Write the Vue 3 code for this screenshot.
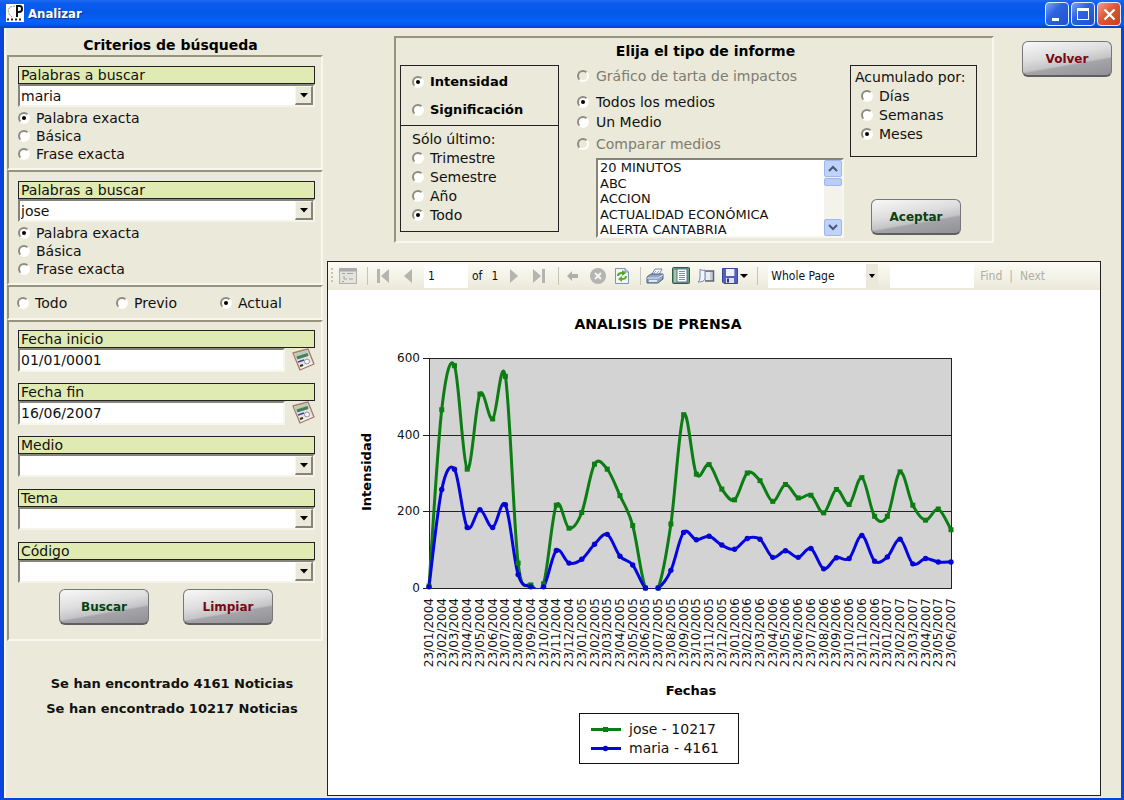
<script setup>
import { ref } from 'vue'

const searches = ref([
  { id: 'p1', word: 'maria', mode: 'Palabra exacta' },
  { id: 'p2', word: 'jose', mode: 'Palabra exacta' }
])
const modes = ['Palabra exacta', 'Básica', 'Frase exacta']
const scopes = ['Todo', 'Previo', 'Actual']
const scope = ref('Actual')
const dates = ref([
  { id: 'inicio', label: 'Fecha inicio', value: '01/01/0001' },
  { id: 'fin', label: 'Fecha fin', value: '16/06/2007' }
])
const filters = ['Medio', 'Tema', 'Código']
const messages = ['Se han encontrado 4161 Noticias', 'Se han encontrado 10217 Noticias']

const measures = ['Intensidad', 'Significación']
const measure = ref('Intensidad')
const periods = ['Trimestre', 'Semestre', 'Año', 'Todo']
const period = ref('Todo')
const steps = ['Días', 'Semanas', 'Meses']
const step = ref('Meses')
const kinds = [
  { name: 'Gráfico de tarta de impactos', disabled: true },
  { name: 'Todos los medios', disabled: false },
  { name: 'Un Medio', disabled: false },
  { name: 'Comparar medios', disabled: true }
]
const kind = ref('Todos los medios')
const media = ['20 MINUTOS', 'ABC', 'ACCION', 'ACTUALIDAD ECONÓMICA', 'ALERTA CANTABRIA']

const jose = [5, 465, 580, 310, 506, 441, 552, 65, 8, 11, 216, 156, 197, 323, 310, 241, 163, 0, 0, 167, 452, 297, 322, 258, 230, 300, 280, 226, 270, 235, 242, 196, 257, 218, 288, 187, 187, 303, 216, 177, 206, 152]
const maria = [3, 257, 310, 158, 204, 158, 217, 35, 3, 3, 98, 65, 75, 114, 140, 83, 60, 0, 0, 46, 145, 126, 135, 112, 101, 129, 127, 80, 97, 80, 103, 50, 79, 77, 137, 70, 81, 127, 63, 77, 68, 68]

const plot = { left: 101, right: 623, top: 68, bottom: 298 }
const xAt = (i) => plot.left + (i * (plot.right - plot.left)) / (jose.length - 1)
const yAt = (v) => plot.bottom - (v * (plot.bottom - plot.top)) / 600
const toPoints = (values) => values.map((v, i) => ({ x: xAt(i), y: yAt(v) }))

// Cardinal spline through every point
function spline(points) {
  let d = `M${points[0].x} ${points[0].y}`
  for (let i = 0; i < points.length - 1; i++) {
    const a = points[Math.max(i - 1, 0)]
    const b = points[i]
    const c = points[i + 1]
    const e = points[Math.min(i + 2, points.length - 1)]
    d += `C${b.x + (c.x - a.x) / 6} ${b.y + (c.y - a.y) / 6} ${c.x - (e.x - b.x) / 6} ${c.y - (e.y - b.y) / 6} ${c.x} ${c.y}`
  }
  return d
}
const josePoints = toPoints(jose)
const mariaPoints = toPoints(maria)
const labels = jose.map((_, i) => `23/${String((i % 12) + 1).padStart(2, '0')}/${2004 + Math.floor(i / 12)}`)
const levels = [600, 400, 200, 0]
</script>

<template>
  <div class="window">
    <header class="titlebar">
      <svg class="app-icon" width="18" height="18" viewBox="0 0 18 18" aria-hidden="true">
        <rect width="18" height="18" fill="#fff" />
        <path d="M9 2L4 3L2 6L3 10L6 13" fill="none" stroke="#8b93a5" stroke-dasharray="2 1" />
        <path d="M11 13V2H14Q16 2 16 5Q16 8 13 8H11" fill="none" stroke="#111" stroke-width="2" />
        <path d="M1 15.5H17" stroke="#222" stroke-width="2" stroke-dasharray="2 2" />
      </svg>
      <h1>Analizar</h1>
      <div class="win-buttons">
        <button type="button" aria-label="Minimizar"><svg width="21" height="21" viewBox="0 0 21 21"><path d="M5 15.5H12" stroke="#fff" stroke-width="3" /></svg></button>
        <button type="button" aria-label="Maximizar"><svg width="21" height="21" viewBox="0 0 21 21"><path d="M4 5.5H16" stroke="#fff" stroke-width="3" /><rect x="4.500" y="4.500" width="11" height="11" fill="none" stroke="#fff" /></svg></button>
        <button type="button" class="close" aria-label="Cerrar"><svg width="21" height="21" viewBox="0 0 21 21"><path d="M5.500 5.500L15.500 15.500M15.500 5.500L5.500 15.500" stroke="#fff" stroke-width="2.300" /></svg></button>
      </div>
    </header>

    <div class="body">
      <aside class="side">
        <h2>Criterios de búsqueda</h2>
        <section v-for="s in searches" :key="s.id" class="group search">
          <label class="caption" :for="s.id">Palabras a buscar</label>
          <div class="combo">
            <select :id="s.id" v-model="s.word"><option>{{ s.word }}</option></select>
            <span class="drop"><svg width="8" height="5" viewBox="0 0 8 5"><path d="M0 0H8L4 4.500Z" /></svg></span>
          </div>
          <div class="stack">
            <label v-for="m in modes" :key="m" class="choice"><input v-model="s.mode" type="radio" :name="s.id + '-modo'" :value="m" />{{ m }}</label>
          </div>
        </section>

        <section class="group scopes">
          <label v-for="s in scopes" :key="s" class="choice"><input v-model="scope" type="radio" name="ambito" :value="s" />{{ s }}</label>
        </section>

        <section class="group filters">
          <div v-for="d in dates" :key="d.id">
            <label class="caption" :for="d.id">{{ d.label }}</label>
            <div class="date-row">
              <input :id="d.id" v-model="d.value" type="text" />
              <button type="button" :aria-label="'Calendario ' + d.label">
                <svg width="24" height="24" viewBox="0 0 24 24">
                  <path d="M2 5L17 1L23 16L9 22Z" fill="#e9e6d8" stroke="#a5786a" stroke-width="1.300" stroke-linejoin="round" />
                  <path d="M3 6L16 2L18 7L5 11Z" fill="#b9cdb9" />
                  <path d="M6 10L17 6.500" stroke="#47805c" stroke-width="3" />
                  <path d="M7 14L13 12" stroke="#36479a" stroke-width="1.500" />
                  <path d="M9 18L12 17" stroke="#333" stroke-width="2" />
                  <circle cx="16" cy="13.500" r="2.500" fill="#f5f4fa" stroke="#8e8fa5" />
                  <path d="M10 20L21 15" stroke="#fff" />
                </svg>
              </button>
            </div>
          </div>
          <div v-for="f in filters" :key="f">
            <label class="caption" :for="'f-' + f">{{ f }}</label>
            <div class="combo">
              <select :id="'f-' + f"><option></option></select>
              <span class="drop"><svg width="8" height="5" viewBox="0 0 8 5"><path d="M0 0H8L4 4.500Z" /></svg></span>
            </div>
          </div>
          <div class="actions">
            <button type="button" class="push go">Buscar</button>
            <button type="button" class="push stop">Limpiar</button>
          </div>
        </section>
        <div class="messages"><p v-for="m in messages" :key="m">{{ m }}</p></div>
      </aside>

      <main class="main">
        <div class="top">
          <section class="group report">
            <h2>Elija el tipo de informe</h2>
            <div class="report-cols">
              <div class="framed measure">
                <div class="strong">
                  <label v-for="m in measures" :key="m" class="choice"><input v-model="measure" type="radio" name="medida" :value="m" />{{ m }}</label>
                </div>
                <div class="periods">
                  <p>Sólo último:</p>
                  <label v-for="p in periods" :key="p" class="choice"><input v-model="period" type="radio" name="periodo" :value="p" />{{ p }}</label>
                </div>
              </div>
              <div class="kinds">
                <label v-for="k in kinds" :key="k.name" class="choice" :class="{ off: k.disabled }"><input v-model="kind" type="radio" name="tipo" :value="k.name" :disabled="k.disabled" />{{ k.name }}</label>
                <div class="listbox">
                  <select size="5" multiple aria-label="Medios"><option v-for="m in media" :key="m">{{ m }}</option></select>
                  <div class="scroll" aria-hidden="true">
                    <span class="arrow"><svg width="10" height="7" viewBox="0 0 10 7"><path d="M1 6L5 2L9 6" /></svg></span>
                    <span class="thumb"></span>
                    <span class="arrow down"><svg width="10" height="7" viewBox="0 0 10 7"><path d="M1 1L5 5L9 1" /></svg></span>
                  </div>
                </div>
              </div>
              <div class="right">
                <div class="framed steps">
                  <p>Acumulado por:</p>
                  <label v-for="s in steps" :key="s" class="choice"><input v-model="step" type="radio" name="acumulado" :value="s" />{{ s }}</label>
                </div>
                <button type="button" class="push go">Aceptar</button>
              </div>
            </div>
          </section>
          <button type="button" class="push stop back">Volver</button>
        </div>

        <section class="viewer">
          <div class="toolbar">
            <span class="grip"></span>
            <button type="button" class="tb w20" aria-label="Document map"><svg width="18" height="18" viewBox="0 0 18 18"><rect x=".5" y="1.500" width="17" height="15" fill="#e4e4df" stroke="#b0b0ab" /><path d="M1 3H17" stroke="#aaa" stroke-width="3" /><path d="M3 6.500H6M8 6.500H14M5 9V12H8M10 12H14M3 14.500H5" stroke="#a5a5a0" fill="none" /></svg></button>
            <i class="sep s1"></i>
            <button type="button" class="tb w24" aria-label="First page"><svg width="12" height="14" viewBox="0 0 12 14"><path d="M0 0H3V14H0ZM12 0V14L4 7Z" fill="#b5b5b0" /></svg></button>
            <button type="button" class="tb w26" aria-label="Previous page"><svg width="8" height="14" viewBox="0 0 8 14"><path d="M8 0V14L0 7Z" fill="#b5b5b0" /></svg></button>
            <input class="page-no" type="text" value="1" aria-label="Page" />
            <span class="pages"><span>of</span><span>1</span></span>
            <button type="button" class="tb w24" aria-label="Next page"><svg width="8" height="14" viewBox="0 0 8 14"><path d="M0 0V14L8 7Z" fill="#b5b5b0" /></svg></button>
            <button type="button" class="tb w26" aria-label="Last page"><svg width="12" height="14" viewBox="0 0 12 14"><path d="M9 0H12V14H9ZM0 0V14L8 7Z" fill="#b5b5b0" /></svg></button>
            <i class="sep s2"></i>
            <button type="button" class="tb w26" aria-label="Back"><svg width="12" height="10" viewBox="0 0 12 10"><path d="M0 5L5 0V3H11V7H5V10Z" fill="#b0b0ab" /></svg></button>
            <button type="button" class="tb w24" aria-label="Stop"><svg width="16" height="16" viewBox="0 0 16 16"><circle cx="8" cy="8" r="8" fill="#b4b4b0" /><path d="M5 5L11 11M11 5L5 11" stroke="#f4f4f0" stroke-width="2" /></svg></button>
            <button type="button" class="tb w24" aria-label="Refresh"><svg width="16" height="18" viewBox="0 0 16 18"><path d="M1.500 1.500H11L14.500 5V16.500H1.500Z" fill="#eff5fb" stroke="#7f94b2" /><path d="M11 1.500V5H14.500" fill="#bccbe0" stroke="#7f94b2" /><path d="M4 9Q4 6 8 6H9" stroke="#53a528" stroke-width="2" fill="none" /><path d="M8 3L12 6L8 9Z" fill="#53a528" /><path d="M12 9Q12 12 8 12H7" stroke="#6aa912" stroke-width="2" fill="none" /><path d="M8 9L4 12L8 15Z" fill="#6aa912" /></svg></button>
            <i class="sep s2"></i>
            <button type="button" class="tb w26" aria-label="Print"><svg width="18" height="17" viewBox="0 0 18 17"><path d="M6 6L9 1H16L13 7Z" fill="#f4f8fd" stroke="#7588aa" /><path d="M1 9L5 6H17V11L12 15H1Z" fill="#8fa5c4" stroke="#4b5f82" /><path d="M1 10H12L17 7" stroke="#dfe9f5" fill="none" /><path d="M3 13H11" stroke="#fff" stroke-width="1.500" /><path d="M8 5L10 3M11 5L13 3" stroke="#9aabc5" /></svg></button>
            <button type="button" class="tb w26" aria-label="Print layout"><svg width="18" height="18" viewBox="0 0 18 18"><rect x=".5" y=".5" width="17" height="16" rx="1" fill="#6c9b80" stroke="#35574f" /><path d="M2 3H5V15H2Z" fill="#a0c8a2" /><rect x="5" y="2" width="10" height="13" fill="#fff" stroke="#597594" /><path d="M7 4.500H13M7 6.500H13M7 8.500H13M7 10.500H13M7 12.500H13" stroke="#7e91a3" /></svg></button>
            <button type="button" class="tb w24" aria-label="Page setup"><svg width="18" height="16" viewBox="0 0 18 16"><path d="M8 3H16.500V13H8" fill="#c6cdd5" stroke="#5a6675" stroke-width="1.500" /><path d="M1 14Q3 13 3 9V1.500Q6 3 8 2V11Q7 14 1 14Z" fill="#eef5fc" stroke="#7588a0" /><path d="M9 4H13V12H9Z" fill="#e9edf1" /></svg></button>
            <button type="button" class="tb w34" aria-label="Export"><svg width="26" height="16" viewBox="0 0 26 16"><path d="M.5.5H15.500V15.500H2L.5 14Z" fill="#5460bd" stroke="#3b459b" /><rect x="4" y="1" width="8" height="7" fill="#f0f2fb" /><path d="M12.500 1V8" stroke="#8d96dc" /><rect x="4" y="10" width="8" height="5" fill="#dde1ee" /><path d="M6 10.500V14.500" stroke="#2e3478" stroke-width="2" /><path d="M18 6H26L22 10Z" fill="#000" /></svg></button>
            <i class="sep s3"></i>
            <span class="zoom"><select aria-label="Zoom"><option>Whole Page</option></select><span><svg width="6" height="4" viewBox="0 0 6 4"><path d="M0 0H6L3 4Z" /></svg></span></span>
            <input class="find" type="text" aria-label="Find text" />
            <button type="button" class="word">Find</button><span class="bar">|</span><button type="button" class="word">Next</button>
          </div>

          <svg class="chart" viewBox="0 0 772 500" role="img" aria-label="Analisis de prensa">
            <defs><clipPath id="plot-area"><rect :x="plot.left - 2" :y="plot.top" :width="plot.right - plot.left + 4" :height="plot.bottom - plot.top + 1" /></clipPath></defs>
            <text class="b t14" x="330" y="39" text-anchor="middle">ANALISIS DE PRENSA</text>
            <rect :x="plot.left" :y="plot.top" :width="plot.right - plot.left" :height="plot.bottom - plot.top" fill="#d3d3d3" />
            <g v-for="l in levels" :key="l">
              <rect class="ink" :x="plot.left - 6" :y="Math.round(yAt(l))" :width="plot.right - plot.left + 6" height="1" />
              <text class="t12" :x="plot.left - 9" :y="Math.round(yAt(l)) + 4" text-anchor="end">{{ l }}</text>
            </g>
            <rect class="ink" :x="plot.left" :y="plot.top" width="1" :height="plot.bottom - plot.top + 1" />
            <rect class="ink" :x="plot.right" :y="plot.top" width="1" :height="plot.bottom - plot.top + 1" />
            <g clip-path="url(#plot-area)" fill="none" stroke-width="3">
              <path :d="spline(josePoints)" stroke="#0c7d13" />
              <path :d="spline(mariaPoints)" stroke="#0505e0" />
            </g>
            <rect v-for="(p, i) in josePoints" :key="'j' + i" :x="p.x - 2.5" :y="p.y - 2.5" width="5" height="5" fill="#0c7d13" />
            <circle v-for="(p, i) in mariaPoints" :key="'m' + i" :cx="p.x" :cy="p.y" r="2.700" fill="#0505d0" />
            <text v-for="(d, i) in labels" :key="d" class="t12" text-anchor="end" :transform="`translate(${Math.round(xAt(i)) + 4} 308) rotate(-90)`">{{ d }}</text>
            <text class="b t13" text-anchor="middle" transform="translate(43 182) rotate(-90)">Intensidad</text>
            <text class="b t13" x="363" y="405" text-anchor="middle">Fechas</text>
            <rect x="251.500" y="423.500" width="159" height="50" fill="#fff" stroke="#111" />
            <path d="M263 439.500H293" stroke="#0c7d13" stroke-width="3" /><rect x="275" y="437" width="5" height="5" fill="#0c7d13" />
            <path d="M263 458.500H293" stroke="#0505e0" stroke-width="3" /><circle cx="277.500" cy="458.500" r="2.700" fill="#0505d0" />
            <text class="t14" x="301" y="444">jose - 10217</text>
            <text class="t14" x="301" y="463">maria - 4161</text>
          </svg>
        </section>
      </main>
    </div>
  </div>
</template>

<style>
body { background: #ebe9d9; }
</style>

<style scoped>
* { box-sizing: border-box; margin: 0; }
.window { min-height: 100vh; display: flex; flex-direction: column; background: #ebe9d9; font: 14px/18px "DejaVu Sans", Verdana, sans-serif; color: #111; border: solid #0845d8; border-width: 0 3px 2px 4px; }
button, input, select { font: inherit; color: inherit; }
button { padding: 0; border: 0; background: none; }

.titlebar { height: 28px; margin: 0 -3px 0 -4px; padding: 0 3px 0 6px; display: flex; align-items: center; gap: 4px; background: linear-gradient(#1f6af0 0, #0a5cf0 12%, #0557e8 45%, #0462f8 75%, #0359ee 88%, #0540c0); color: #fff; }
.app-icon { margin-bottom: 2px; }
.titlebar h1 { flex: 1; font: bold 13px/18px "DejaVu Sans Condensed", "DejaVu Sans", sans-serif; text-shadow: 1px 1px #0a3596; }
.win-buttons { display: flex; gap: 2px; }
.win-buttons button { width: 24px; height: 24px; border: 1px solid #e5eefc; border-radius: 4px; background: linear-gradient(135deg, #7da4f3, #2e63e0 40%, #1b50cf); display: grid; place-items: center; }
.win-buttons .close { background: linear-gradient(135deg, #efa088, #dc5935 45%, #c5401d); }

.body { flex: 1; display: grid; grid-template-columns: 321px minmax(0, 1fr); border-left: 2px solid #f7f7ef; }
.side { padding: 0 4px 0 1px; }
h2 { font-size: 14px; line-height: 18px; text-align: center; color: #000; }
.side h2 { padding: 8px 0 1px 11px; }
.group { border: 2px solid; border-color: #96937f #f8f7ee #f8f7ee #96937f; }
.side .group { padding: 9px 6px 5px 9px; }
.caption { display: block; height: 18px; border: 1px solid #222; background: #dfebb3; padding-left: 2px; line-height: 17px; }
.combo { height: 23px; display: flex; background: #fff; border: 2px solid; border-color: #85837a #f5f4ea #f5f4ea #85837a; position: relative; }
.combo select { flex: 1; width: 100%; appearance: none; border: 0; background: none; padding: 0 22px 0 1px; line-height: 18px; outline: 0; }
.drop { position: absolute; top: 0; right: 0; width: 18px; height: 19px; background: #ebe9d9; border: solid; border-width: 1px 2px 2px 1px; border-color: #f8f7ee #85837a #85837a #f8f7ee; display: grid; place-items: center; pointer-events: none; }
.stack { margin-top: 2px; display: grid; }
.choice { display: flex; align-items: center; gap: 6px; white-space: nowrap; }
.choice input { appearance: none; flex: none; width: 12px; height: 12px; margin: 0; border: 2px solid; border-color: #8e8c80 #fffef8 #fffef8 #8e8c80; border-radius: 50%; background: #fff; display: grid; place-items: center; }
.choice input:checked::after { content: ""; width: 4px; height: 4px; border-radius: 50%; background: #000; }
.choice input:disabled { background: #ebe9d9; }
.off { color: #7e7c72; }
.side .scopes { height: 35px; padding: 0 6px 0 8px; display: grid; grid-template-columns: 99px 104px 1fr; align-items: center; }
.side .filters { padding: 8px 6px 14px 9px; display: grid; row-gap: 12px; }
.date-row { display: flex; gap: 6px; height: 24px; margin-bottom: -1px; }
.date-row input { flex: 1; min-width: 0; height: 24px; border: 2px solid; border-color: #85837a #f8f7ee #f8f7ee #85837a; background: #fff; padding: 0 1px; outline: 0; }
.actions { display: flex; gap: 34px; margin: -6px 0 0 41px; }
.push { width: 90px; height: 36px; border: 1px solid #77777a; border-bottom: 2px solid #5f5f62; border-radius: 6px; background: linear-gradient(170deg, #f8f8f8 0, #dededf 40%, #c4c4c6 62%, #a5a5a9 66%, #919195 100%); font-size: 12px; font-weight: bold; line-height: 16px; }
.go { color: #07420f; }
.stop { color: #7c0813; }
.messages { padding: 34px 0 0 14px; text-align: center; font-size: 13px; font-weight: bold; }
.messages p { line-height: 18px; margin-bottom: 7px; }

.main { display: flex; flex-direction: column; min-width: 0; }
.top { display: flex; align-items: flex-start; justify-content: space-between; padding: 8px 9px 18px 67px; }
.report { width: 600px; height: 207px; padding: 0 15px 0 4px; }
.report h2 { padding: 4px 0 5px 34px; }
.report-cols { display: grid; grid-template-columns: 159px 1fr 127px; }
.framed { border: 1px solid #222; }
.measure { height: 167px; }
.strong { height: 60px; padding: 7px 0 0 11px; border-bottom: 1px solid #222; font-size: 13px; font-weight: bold; color: #000; }
.strong .choice + .choice { margin-top: 10px; }
.periods { padding: 4px 0 0 11px; }
.periods .choice, .steps .choice { height: 19px; }
.kinds { padding: 1px 6px 0 18px; }
.kinds .choice { height: 20px; gap: 7px; }
.kinds .choice:first-child { margin-bottom: 6px; }
.kinds .choice:nth-child(4) { margin-top: 2px; }
.listbox { display: flex; height: 80px; margin: 4px 0 0 19px; border: 2px solid; border-color: #85837a #f8f7ee #f8f7ee #85837a; background: #fff; }
.listbox select { flex: 1; min-width: 0; height: 76px; border: 0; outline: 0; padding: 0; overflow: hidden; background: #fff; font-size: 13px; line-height: 15px; scrollbar-width: none; }
.listbox option { padding: 0 2px; }
.scroll { width: 18px; display: flex; flex-direction: column; gap: 1px; background: #f3f2eb; }
.scroll .arrow { height: 17px; border: 1px solid #9db6ec; border-radius: 2px; background: #c1d2fa; display: grid; place-items: center; }
.scroll .down { margin-top: auto; }
.scroll path { fill: none; stroke: #44597f; stroke-width: 2; }
.scroll .thumb { height: 8px; border: 1px solid #9db6ec; border-radius: 2px; background: #b9cdf8; }
.steps { height: 92px; padding: 2px 0 0 4px; }
.steps .choice { margin-left: 6px; }
.right .push { display: block; margin: 42px 0 0 21px; }
.back { margin-top: 5px; }

.viewer { flex: 1; margin: 0 20px 2px 0; border: 1px solid #222; background: #fff; }
.toolbar { height: 28px; display: flex; align-items: center; background: linear-gradient(#fcfbf5, #f2f1e5 60%, #e9e8d9); font: 12px/16px "DejaVu Sans Condensed", "DejaVu Sans", sans-serif; overflow: hidden; }
.grip { width: 2px; height: 16px; margin: 0 5px 0 3px; background: repeating-linear-gradient(#c5c3b5 0 2px, transparent 2px 4px); }
.toolbar input, .toolbar select { border: 0; background: #fff; height: 24px; outline: 0; min-width: 0; }
.tb { display: grid; place-items: center; height: 24px; flex: none; }
.w20 { width: 20px; }
.w24 { width: 24px; }
.w26 { width: 26px; }
.w34 { width: 34px; }
.sep { flex: none; width: 1px; height: 18px; background: #c6c4b8; }
.s1 { margin: 0 3px 0 9px; }
.s2 { margin: 0 1px 0 6px; }
.s3 { margin: 0 10px 0 5px; }
.page-no { width: 44px; margin-left: 3px; padding: 0 4px; }
.pages { display: flex; gap: 9px; padding: 0 4px; }
.zoom { flex: none; width: 110px; display: flex; }
.zoom select { flex: 1; appearance: none; padding: 0 3px; }
.zoom > span { width: 12px; background: #e9e8db; display: grid; place-items: center; }
.find { width: 84px; margin: 0 6px 0 12px; }
.word, .bar { color: #b0aea4; }
.bar { margin: 0 7px; }
.chart { display: block; width: 100%; height: auto; font-family: "DejaVu Sans", Verdana, sans-serif; fill: #111; }
.ink { fill: #222; }
.b { font-weight: bold; fill: #000; }
.t12 { font-size: 12px; }
.t13 { font-size: 13px; }
.t14 { font-size: 14px; }
</style>
